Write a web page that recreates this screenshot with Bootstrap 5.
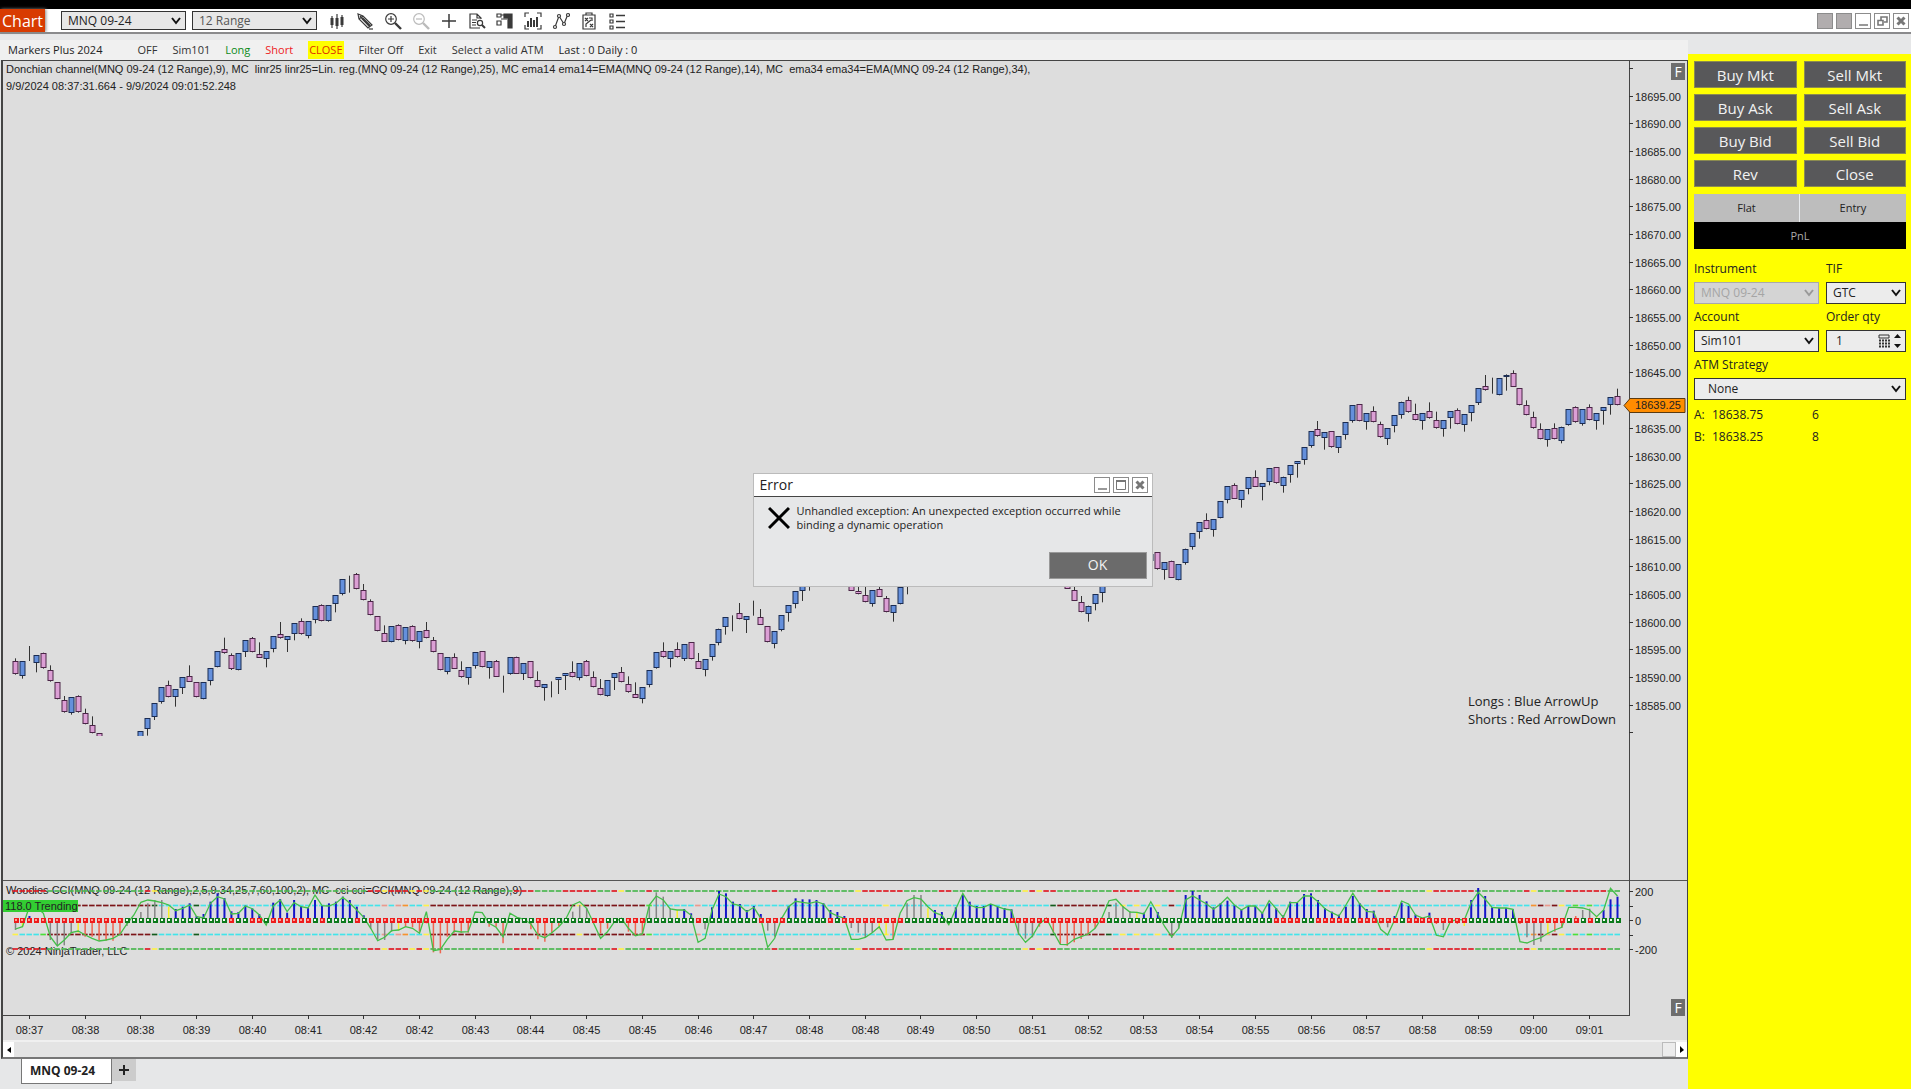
<!DOCTYPE html>
<html lang="en">
<head>
<meta charset="utf-8">
<meta name="viewport" content="width=device-width, initial-scale=1">
<title>Chart - MNQ 09-24</title>
<link href="https://cdn.jsdelivr.net/npm/bootstrap@5.3.0/dist/css/bootstrap.min.css" rel="stylesheet">
<style>
  :root { --ui: "Open Sans", "Noto Sans", sans-serif; --plot: "Liberation Sans", Arial, sans-serif; }
  body { background: #e6e7e8; font-family: var(--ui); font-size: 12px; line-height: 16px; color: #222; overflow: hidden; }
  .desk-edge { height: 9px; background: #000; }
  .titlebar { height: 25px; background: #fff; border-bottom: 2px solid #8a8a8c; }
  .brand { width: 45px; background: #d83b01; color: #fff; font-size: 16px; box-shadow: 1px 0 3px #888; }
  .tool-select, .entry-box {
    appearance: none; border: 1px solid #333; border-radius: 0; color: #222; height: 19px; padding: 0 18px 0 6px; line-height: 16px;
    background: #e7e7e7 url("data:image/svg+xml,%3Csvg xmlns='http://www.w3.org/2000/svg' viewBox='0 0 10 8'%3E%3Cpath d='M1 1l4 5 4-5' fill='none' stroke='%23111' stroke-width='2'/%3E%3C/svg%3E") no-repeat right 4px center / 10px 8px;
  }
  .tool-select { width: 125px; margin-right: 6px; }
  .tool-select.interval { color: #555; }
  .entry-box { height: 22px; width: 100%; background-color: #ececec; }
  .entry-box:disabled { background-color: #d4d4d4; color: #a5a5a5; border-color: #a9a9a9; opacity: 1; background-image: url("data:image/svg+xml,%3Csvg xmlns='http://www.w3.org/2000/svg' viewBox='0 0 10 8'%3E%3Cpath d='M1 1l4 5 4-5' fill='none' stroke='%23999' stroke-width='2'/%3E%3C/svg%3E"); }
  .tool-btn { width: 28px; height: 22px; padding: 0; border: 0; background: none; color: #3a3a3a; display: flex; align-items: center; justify-content: center; }
  .tool-btn svg { width: 18px; height: 18px; fill: none; stroke: currentColor; stroke-width: 1.2; }
  .tool-btn.dimmed { color: #bbb; }
  .win-group { gap: 3px; padding-right: 2px; }
  .win-btn { width: 16px; height: 16px; padding: 0; border: 1px solid #8c8c8c; background: #fff; display: flex; color: #777; }
  .win-btn svg { width: 14px; height: 14px; fill: none; stroke: currentColor; stroke-width: 2; }
  .win-btn.blank { background: #b1adae; }
  .menu-strip { height: 20px; margin-top: 6px; background: #f0f0f0; padding-left: 8px; gap: 15px; font-size: 11px; line-height: 18px; }
  .menu-strip button { border: 0; padding: 0; background: none; color: #333; line-height: 18px; }
  .menu-strip .go-long { color: #0b8a1a; }
  .menu-strip .go-short { color: #ee1c25; }
  .menu-strip .go-close { color: #e03000; background: #ff0; padding: 0 1px; }
  .fill-min { min-width: 0; min-height: 0; }
  .chart-frame { margin-left: 1px; background: #ddd; border: 1px solid #444; border-left-width: 2px; border-bottom: 2px solid #777; }
  .plot { font-family: var(--plot); font-size: 11px; fill: #222; display: block; width: 100%; height: 100%; }
  .plot .note { font-family: var(--ui); font-size: 13px; }
  .hscroll { height: 17px; background: #e4e4e4; border-top: 2px solid #f0f0f0; }
  .hscroll button { width: 11px; padding: 0; border: 0; background: #fff; display: flex; align-items: center; justify-content: center; }
  .hscroll .grip { width: 14px; background: #ececec; border: 1px solid #bbb; }
  .tabs { height: 30px; padding-left: 21px; }
  .tabs .chart-tab { width: 91px; height: 25px; background: #fff; border: 1px solid #777; border-top: 0; font-weight: 700; padding: 0 8px 0 0; color: #222; }
  .tabs .add-tab { width: 24px; height: 22px; border: 0; background: #ccc; padding: 0; display: flex; align-items: center; justify-content: center; }
  .trader { width: 223px; margin-top: 20px; background: #ff0; padding: 7px 5px 0 6px; }
  .order-btn { height: 27px; border: 1px solid #8b8b50; border-radius: 0; background: #58585a; color: #f2f2f2; font-size: 15px; line-height: 22px; padding: 0; }
  .order-grid { display: grid; grid-template-columns: 1fr 1fr; gap: 6px 7px; }
  .status-row { background: #bdbdbd; height: 28px; line-height: 28px; margin-top: 7px; font-size: 11px; text-align: center; }
  .pnl { background: #000; color: #aaa; height: 27px; line-height: 27px; font-size: 11px; text-align: center; margin-bottom: 7px; }
  .trader label { display: block; line-height: 20px; height: 26px; padding-top: 3px; }
  .pair { gap: 7px; }
  .col-wide { width: 125px; }
  .atm-box { padding-left: 13px; }
  .qty { border: 1px solid #333; background: #ececec; height: 22px; }
  .qty input { border: 0; background: none; width: 50px; padding: 0 0 0 9px; appearance: textfield; color: #222; }
  .qty input::-webkit-inner-spin-button { appearance: none; }
  .quote span:first-child { width: 18px; } .quote span:nth-child(2) { width: 100px; }
  .quote { line-height: 22px; }
  .error-box { position: absolute; left: calc(50% - 203px); top: calc(50% - 72px); width: 400px; height: 114px; background: #e6e7e8; border: 1px solid #bbb; }
  .error-head { height: 23px; background: #fff; border-bottom: 1px solid #444; padding: 0 4px 0 6px; font-size: 14px; }
  .error-body { padding: 7px 0 0 14px; gap: 7px; height: 55px; }
  .error-text { line-height: 14px; width: 345px; font-size: 11px; }
  .error-box .order-btn { width: 98px; background: #6b6b6b; border-color: #999; font-size: 14px; margin-right: 5px; }
</style>
<script src="https://cdn.jsdelivr.net/npm/bootstrap@5.3.0/dist/js/bootstrap.bundle.min.js"></script>
</head>
<body>
<div class="vh-100 d-flex flex-column">
  <div class="desk-edge"></div>
  <header class="titlebar d-flex align-items-center">
    <div class="brand h-100 d-flex align-items-center justify-content-center me-3">Chart</div>
    <select class="tool-select" aria-label="Instrument"><option>MNQ 09-24</option></select>
    <select class="tool-select interval" aria-label="Interval"><option>12 Range</option></select>
    <button class="tool-btn" aria-label="Chart style"><svg viewBox="0 0 18 18"><g stroke-width="3"><path d="M4 6v7M9 6v8M14 5v8"/></g><path d="M4 4v12M9 2v15M14 3v12"/></svg></button>
    <button class="tool-btn" aria-label="Draw"><svg viewBox="0 0 18 18"><path d="M2 2l1 5 9 9 4-3-9-9zM3 7l4-3M4 4l10 11"/><path d="M6 6l8 8" stroke-width="2.400"/><path d="M13 17h4"/></svg></button>
    <button class="tool-btn" aria-label="Zoom in"><svg viewBox="0 0 18 18"><circle cx="7" cy="7" r="5.3"/><path d="M4 7h6M7 4v6"/><path d="M11 11l6 6" stroke-width="2.4"/></svg></button>
    <button class="tool-btn dimmed" aria-label="Zoom out"><svg viewBox="0 0 18 18"><circle cx="7" cy="7" r="5.3"/><path d="M4 7h6"/><path d="M11 11l6 6" stroke-width="2.4"/></svg></button>
    <button class="tool-btn" aria-label="Crosshair"><svg viewBox="0 0 18 18"><path d="M9 2v14M2 9h14" stroke-width="1.5"/></svg></button>
    <button class="tool-btn" aria-label="Data box"><svg viewBox="0 0 18 18"><path d="M12 16H2V2h7l4 4v1M9 2v4h4M4 8h5M4 10.500h4M4 13h4"/><circle cx="12" cy="11" r="2.600"/><path d="M14 13l3 3" stroke-width="2"/></svg></button>
    <button class="tool-btn" aria-label="Chart trader"><svg viewBox="0 0 18 18"><path d="M1 2h4v3H1zM1 9h4v4H1zM5 3h6M5 7h6"/><path d="M8 2h8v4H8zM12 3h4v13h-4z" fill="currentColor"/></svg></button>
    <button class="tool-btn" aria-label="Indicators"><svg viewBox="0 0 18 18"><path d="M5 1H1v4M13 1h4v4M5 17H1v-4M13 17h4v-4"/><path d="M4 9v6M7 6v9M10 8v7M13 5v10" stroke-width="2"/></svg></button>
    <button class="tool-btn" aria-label="Drawing tools"><svg viewBox="0 0 18 18"><path d="M3 15L7 4l5 8 4-10"/><g fill="#fff"><circle cx="3" cy="15" r="1.500"/><circle cx="7" cy="4" r="1.500"/><circle cx="12" cy="12" r="1.500"/><circle cx="16" cy="3" r="1.500"/></g></svg></button>
    <button class="tool-btn" aria-label="Strategies"><svg viewBox="0 0 18 18" stroke-width="1"><path d="M3 3h12v14H3zM6 1h6v2H6z"/><path d="M5 6l3 3M8 6l-3 3M10 12l3 3M13 12l-3 3M6 15v-3l5-4M9 6h3v3"/></svg></button>
    <button class="tool-btn" aria-label="Properties"><svg viewBox="0 0 18 18"><path d="M2 2h3v3H2zM2 8h3v3H2zM2 14h3v3H2z"/><path d="M8 3.500h9M8 9.500h9M8 15.500h9" stroke-width="1.600"/></svg></button>
    <div class="win-group ms-auto d-flex">
      <button class="win-btn blank" aria-label="Link instrument"></button>
      <button class="win-btn blank" aria-label="Link interval"></button>
      <button class="win-btn" aria-label="Minimize"><svg viewBox="0 0 14 14"><path d="M3 11h9" stroke-width="1.500"/></svg></button>
      <button class="win-btn" aria-label="Restore"><svg viewBox="0 0 14 14"><path d="M6 6V3h6v5H9M3 6.500h5v4.500H3z" stroke-width="1.600"/></svg></button>
      <button class="win-btn" aria-label="Close"><svg viewBox="0 0 14 14"><path d="M3.500 3.500l7 7M10.500 3.500l-7 7" stroke-width="3"/></svg></button>
    </div>
  </header>

  <main class="d-flex flex-grow-1 fill-min">
    <section class="d-flex flex-column flex-grow-1 fill-min">
      <nav class="menu-strip d-flex flex-shrink-0 align-items-center">
        <span class="me-3 pe-1">Markers Plus 2024</span>
        <button>OFF</button><button>Sim101</button><button class="go-long">Long</button><button class="go-short">Short</button>
        <button class="go-close">CLOSE</button><button>Filter Off</button><button>Exit</button><button>Select a valid ATM</button>
        <span>Last : 0 Daily : 0</span>
      </nav>
      <div class="chart-frame d-flex flex-column flex-grow-1 fill-min">
        <div class="flex-grow-1 fill-min"><svg class="plot" id="plot" role="img" aria-label="MNQ 09-24 price chart"></svg></div>
        <div class="hscroll d-flex flex-shrink-0">
          <button aria-label="Scroll left"><svg width="4" height="6"><path d="M4 0v6L0 3z" fill="#000"/></svg></button>
          <div class="grip ms-auto"></div>
          <button aria-label="Scroll right"><svg width="4" height="7"><path d="M0 0v7l4-3z" fill="#000"/></svg></button>
        </div>
      </div>
      <div class="tabs d-flex flex-shrink-0">
        <button class="chart-tab">MNQ 09-24</button>
        <button class="add-tab" aria-label="Add tab"><svg width="12" height="12"><path d="M6 1v10M1 6h10" stroke="#222" stroke-width="2"/></svg></button>
      </div>
    </section>

    <aside class="trader flex-shrink-0">
      <div class="order-grid">
        <button class="btn order-btn">Buy Mkt</button><button class="btn order-btn">Sell Mkt</button>
        <button class="btn order-btn">Buy Ask</button><button class="btn order-btn">Sell Ask</button>
        <button class="btn order-btn">Buy Bid</button><button class="btn order-btn">Sell Bid</button>
        <button class="btn order-btn">Rev</button><button class="btn order-btn">Close</button>
      </div>
      <div class="status-row d-flex"><div class="w-50 border-end border-secondary-subtle">Flat</div><div class="w-50">Entry</div></div>
      <div class="pnl">PnL</div>
      <div class="pair d-flex">
        <div class="col-wide"><label for="inst">Instrument</label><select id="inst" class="entry-box" disabled><option>MNQ 09-24</option></select></div>
        <div class="flex-grow-1"><label for="tif">TIF</label><select id="tif" class="entry-box"><option>GTC</option></select></div>
      </div>
      <div class="pair d-flex">
        <div class="col-wide"><label for="acct">Account</label><select id="acct" class="entry-box"><option>Sim101</option></select></div>
        <div class="flex-grow-1"><label for="qty">Order qty</label>
          <div class="qty d-flex align-items-center"><input id="qty" type="number" value="1">
            <svg width="26" height="16" viewBox="0 0 26 16"><path d="M2 2h10v3H2z" fill="none" stroke="#333"/><path d="M2 7.500h11M2 10.500h11M2 13.500h11" stroke="#333" stroke-width="2" stroke-dasharray="2 1"/><path d="M17 5l3.500-4L24 5zM17 11l3.500 4 3.500-4z" fill="#111"/></svg></div>
        </div>
      </div>
      <label for="atm">ATM Strategy</label>
      <select id="atm" class="entry-box atm-box"><option>None</option></select>
      <div class="quote d-flex mt-1"><span>A:</span><span>18638.75</span><span>6</span></div>
      <div class="quote d-flex"><span>B:</span><span>18638.25</span><span>8</span></div>
    </aside>
  </main>
</div>

<div class="error-box" role="alertdialog" aria-labelledby="errTitle">
  <div class="error-head d-flex align-items-center"><span id="errTitle" class="me-auto">Error</span>
    <div class="win-group d-flex pe-0">
      <button class="win-btn" aria-label="Minimize"><svg viewBox="0 0 14 14"><path d="M3 11h9" stroke-width="1.500"/></svg></button>
      <button class="win-btn" aria-label="Maximize"><svg viewBox="0 0 14 14"><path d="M2.500 3v8.500h9V3" stroke-width="1"/><path d="M2 3h10"/></svg></button>
      <button class="win-btn" aria-label="Close"><svg viewBox="0 0 14 14"><path d="M3.500 3.500l7 7M10.500 3.500l-7 7" stroke-width="3"/></svg></button>
    </div>
  </div>
  <div class="error-body d-flex">
    <svg width="22" height="26" viewBox="0 0 22 26" class="flex-shrink-0"><path d="M1 4l20 20M21 4L1 24" stroke="#000" stroke-width="3"/></svg>
    <div class="error-text">Unhandled exception: An unexpected exception occurred while binding a dynamic operation</div>
  </div>
  <div class="d-flex justify-content-end"><button class="btn order-btn">OK</button></div>
</div>

<script>
// Candles: first bar number and top offset of each run, then "colour high open-close-top open-close-bottom low" in thirds of a pixel.
const RUNS = [
[0,560,"P 295 304 344 344,B 304 304 349 356,K 258 303 303 303,B 286 286 310 337,P 278 280 326 326,P 316 331 365 365,P 367 367 418 418,P 408 421 458 458,B 412 412 461 464,P 406 409 458 458,P 446 460 493 493,P 469 496 520 520,P 520 520 570 570"],
[18,560,"B 514 514 560 560,B 475 475 509 527,B 430 430 473 480,B 382 382 428 431,P 362 376 412 412,B 388 388 412 440,B 352 352 385 402,P 316 348 365 365,P 367 367 412 412,B 367 367 418 418,B 325 325 365 376,B 274 274 322 322,P 233 268 281 281,P 280 286 328 330,B 280 280 331 331,B 240 240 277 291,P 231 235 277 277,P 247 281 293 293,B 274 274 298 322,B 229 229 269 277,P 186 223 236 236,B 229 229 241 276,B 190 190 224 241,P 175 184 224 224,B 184 184 230 235,B 139 139 182 190,P 133 136 184 184,B 136 136 185 185,B 106 106 133 157,B 58 58 103 106,B 47 49 53 98,P 39 43 88 88,P 72 91 121 121,P 118 123 166 166,P 168 168 214 214,P 196 218 245 245,B 199 199 247 247,P 193 196 241 241,B 202 202 245 253,P 196 199 245 245,B 214 214 247 265,P 186 211 235 235,P 231 240 277 277,P 280 280 331 331,B 292 292 336 343,P 280 290 326 326,P 304 331 353 353,B 322 322 355 374,B 277 277 319 326,P 274 274 322 322,B 304 304 326 356,P 300 302 349 349,K 347 350 352 398,B 292 292 344 344,P 290 290 340 340,B 310 310 344 360,P 304 304 355 355,P 334 361 382 382,B 373 373 385 422,K 364 367 367 412,B 352 352 360 402,B 339 339 349 390,P 304 337 352 352,B 310 310 356 361,P 300 304 349 349,P 334 352 382 382,P 357 385 406 406,B 361 361 410 410,B 339 339 355 390,P 321 337 367 367,P 349 373 398 398,P 367 401 412 412,B 382 382 418 430,B 331 331 377 382,B 277 277 326 326,P 247 274 293 293,B 274 274 298 322,P 247 268 293 293,B 253 253 298 303,P 247 247 298 298,P 279 303 327 327,B 298 298 331 349,B 253 253 293 302,B 206 206 247 256,B 172 172 203 224,K 166 167 167 214,P 129 160 178 178,B 169 169 182 219,K 122 167 167 167,P 147 172 195 195,P 199 199 247 247,B 214 214 253 265,B 166 166 212 214,B 136 136 161 185,B 94 94 133 145,B 50 50 93 123,B 40 50 70 92"],
[120,560,"P 60 60 92 92,P 76 94 103 103,P 76 106 127 127,B 91 91 133 140,P 76 86 111 111,P 108 115 157 157,B 136 136 161 185,B 82 82 133 133,K 50 78 79 103"],
[151,360,"P 660 660 687 687,P 660 691 723 723,P 708 727 757 757,B 737 737 761 785,B 703 703 733 751,B 670 670 699 727"],
[163,360,"B 583 583 603 603,P 577 577 629 629,B 607 607 631 659,P 602 602 654 654,B 612 612 659 661,B 566 566 608 614,B 520 520 563 569,B 487 487 517 536,P 460 481 508 508,B 478 478 512 530,B 424 424 475 475,B 379 379 421 430,P 370 375 416 416,B 391 391 421 443,B 352 352 387 403,P 331 350 380 380,B 370 370 382 421,B 325 325 368 376,P 322 322 371 371,B 350 350 376 398,B 316 316 347 368,B 304 304 313 353,B 262 262 302 314,B 214 214 260 263,P 183 208 230 230,B 216 216 234 269,P 214 214 263 263,B 229 229 266 279,B 187 187 227 239,B 136 136 184 188,P 133 133 184 184,B 160 160 187 209,P 139 154 187 187,P 185 193 233 233,B 205 205 238 255,B 166 166 200 217,B 125 125 163 176,P 110 121 158 158,P 131 163 181 181,B 160 160 184 209,P 127 154 176 176,P 155 181 206 206,B 181 181 209 230,B 154 154 176 206,P 145 151 193 193,B 163 163 197 215,B 136 136 160 184,B 85 85 130 135,P 45 79 92 92,K 53 98 101 101,B 55 55 106 106,B 43 44 51 92,P 31 38 79 79,P 85 85 136 136,P 121 136 166 166,P 155 172 206 206,P 190 208 238 238,B 208 208 242 260,P 190 205 238 238,B 200 200 242 250,B 148 148 197 197,P 139 142 188 188,B 148 148 193 197,P 133 142 181 181,B 160 160 184 209,B 142 142 154 194,B 112 112 136 164,P 86 109 136 136"]];
// Run-length colour rows of the Woodies CCI panel.
const L200 = "R5 G14 R Y G30 R2 Y R3 Y R Y G12 R3 G4 R5 G2 R Y G3 R G17 R G11 Y R6 G5 R2 G10 Y R Y R2 G8 R4 G4 R G29 R2 G5 Y R6 G7 R Y G4 R6 G2";
const L100 = "Y C3 L D15 K C5 K C26 S C S O C2 Y D21 Y D9 L C6 S C26 Y C23 K D7 K C Y C Y C2 Y C D C51 O D S D Y C L C L C4";
const ZERO = "R16 G15 R G2 R2 G R6 G R G4 R G R15 G9 R2 G6 R2 G3 R3 G7 R G8 R4 G6 R G R9 G15 R14 G24 R4 G2 R5 G R6 G R9 G7 R7 G R G R G4";
// Histogram "colour+height", then the CCI line height, per bar.
const CCI = "g-30 -27 y-20 -20 b12 40 n0 38 n0 20 g-60 -50 g-75 -78 g-76 -60 g-38 -38 y-38 -33 r-50 -45 r-50 -55 r-62 -63 r-62 -60 r-62 -55 r-45 -43 g-18 -12 g5 15 g24 53 g50 60 g60 57 g60 52 y40 45 b33 28 b40 35 b50 45 b12 10 b18 6 b55 50 b80 70 b66 63 b26 18 b24 20 b43 42 b35 34 b18 15 n-5 -15 b52 42 b63 60 b22 25 b60 52 b42 40 b36 36 b60 75 b42 43 b50 42 b55 50 b70 68 b60 50 b40 30 b14 8 g-26 -25 g-58 -62 g-60 -52 g-35 -32 y-32 -30 r-20 -20 r-22 -25 r-35 -40 r-10 25 r-97 -92 r-100 -88 r-50 -58 r-38 -33 r-38 -36 r-38 -35 n0 24 n0 22 r-20 -10 r-20 -22 r-70 -50 n0 20 n0 8 n0 2 r-28 -12 r-58 -45 r-65 -53 r-40 -38 r-18 -20 n0 3 g25 45 g45 55 g35 35 r-8 -10 r-40 -55 r-26 -35 n0 -5 n0 5 r-35 -25 r-48 -47 r-45 -42 g40 45 g83 72 g70 60 g35 33 y30 30 b33 30 b20 14 r-5 -67 g-28 -55 b38 30 b87 78 b80 70 b55 48 b48 43 b30 25 b42 38 b18 5 g-32 -82 g-50 -55 b8 5 b42 40 b65 56 b62 53 b62 50 b60 55 b50 48 b30 22 b24 12 b12 5 g-24 -58 g-38 -58 g-52 -52 g-38 -38 y-28 -20 y-45 -60 r-58 -58 n0 20 g50 58 g75 67 g75 63 y35 40 b30 22 b24 14 n0 -14 b38 33 b75 80 b55 45 b42 37 b42 38 b48 48 b40 40 b36 33 b32 30 g-45 -40 g-56 -67 g-52 -48 r-20 -12 n0 5 r-38 -35 r-72 -73 r-77 -74 r-67 -58 r-57 -50 r-45 -42 r-25 -25 n0 8 g24 58 g52 62 g42 40 g26 24 y25 23 b22 18 b38 55 b24 18 n0 -20 g-54 -50 g-26 -25 b75 60 b87 73 b75 60 b56 48 b38 32 b50 48 b58 68 b44 45 b30 30 b42 42 b42 42 b22 20 b50 58 b36 34 b14 8 b55 52 b53 52 b78 72 b80 72 b60 55 b36 34 b25 22 b16 12 b40 45 b72 80 b50 48 b33 26 b28 24 r-10 -28 g-22 -45 b12 0 b52 57 b42 48 b16 15 b6 6 b22 12 r-12 -46 g-30 -50 n0 -5 r-12 2 y-18 0 b60 52 b96 83 b72 62 b38 38 b36 36 b36 36 b32 32 r-12 -65 g-52 -69 g-75 -60 g-65 -53 y-45 -40 r-35 -30 r-24 -22 n0 38 r12 38 g30 36 g34 30 y12 10 b30 30 b62 95 b70 72".split(" ");
const TIMES = "08:37 08:38 08:38 08:39 08:40 08:41 08:42 08:42 08:43 08:44 08:45 08:45 08:46 08:47 08:48 08:48 08:49 08:50 08:51 08:52 08:53 08:54 08:55 08:56 08:57 08:58 08:59 09:00 09:01".split(" ");
const expand = s => s.split(" ").map(t => t[0].repeat(+t.slice(1) || 1)).join("");
const HUE = {R:"#e01b24",G:"#4cb851",Y:"#fdf04a",C:"#43e4ea",L:"#4be03a",D:"#7c1518",K:"#135c1d",S:"#e99a8e",O:"#f59331"};
const BAR = {g:"#858585",y:"#f7f02a",b:"#1414c8",r:"#f06450",n:"none"};
const FILL = {P:"#dc9fd5",B:"#6590dc",K:"#222"};
const svg = document.getElementById("plot");

function draw() {
  const W = svg.clientWidth, H = svg.clientHeight, top = 61;
  const ax = W - 58, mid = H - 160, foot = H - 25, z = mid + 40;
  const step = (ax - 24) / 230, X = i => 12.5 + step * i;
  let o = "";
  const line = (x1, y1, x2, y2, c, w) => o += `<path d="M${x1} ${y1}L${x2} ${y2}" stroke="${c}" stroke-width="${w || 1}" fill="none"/>`;
  const text = (x, y, s, a) => o += `<text x="${x}" y="${y}" ${a || ""}>${s}</text>`;
  o += `<clipPath id="clip"><rect width="${W}" height="675"/></clipPath><g clip-path="url(#clip)">`;
  for (const [first, oy, list] of RUNS) list.split(",").forEach((c, k) => {
    const [col, ...v] = c.split(" "), [h, a, b, l] = v.map(n => oy - top + n / 3), x = Math.floor(X(first + k)) + .5;
    line(x, h, x, l, "#333");
    const bt = Math.round(a) + .5, bh = Math.max(0, Math.round(b - a) - 1);
    o += `<rect x="${x - 2.5}" y="${bt}" width="5" height="${bh}" fill="${FILL[col]}" stroke="${col == "P" ? "#4a2547" : col == "B" ? "#1b2c52" : "#111"}"/>`;
  });
  o += "</g>";
  text(3, 12, "Donchian channel(MNQ 09-24 (12 Range),9), MC&#160; linr25 linr25=Lin. reg.(MNQ 09-24 (12 Range),25), MC ema14 ema14=EMA(MNQ 09-24 (12 Range),14), MC&#160; ema34 ema34=EMA(MNQ 09-24 (12 Range),34),");
  text(3, 29, "9/9/2024 08:37:31.664 - 9/9/2024 09:01:52.248");
  text(ax - 161, 645, "Longs : Blue ArrowUp", 'class="note"');
  text(ax - 161, 663, "Shorts : Red ArrowDown", 'class="note"');
  // indicator panel
  line(0, mid + .5, W, mid + .5, "#555");
  text(3, mid + 14, "Woodies CCI(MNQ 09-24 (12 Range),2,5,9,34,25,7,60,100,2), MC&#160; cci cci=CCI(MNQ 09-24 (12 Range),9)");
  text(3, mid + 75, "© 2024 NinjaTrader, LLC");
  const a = expand(L200), b = expand(L100), q = expand(ZERO);
  let path = "";
  for (let i = 0; i < 231; i++) {
    const x = X(i), m = CCI[2 * i], v = +m.slice(1) / 3;
    for (const s of [-1, 1]) {
      line(x - 3, z + s * 29, x + 2.5, z + s * 29, HUE[a[i]], 1.7);
      line(x - 3, z + s * 14.5, x + 2.5, z + s * 14.5, HUE[b[i]], 1.7);
    }
    if (m[0] != "n") line(x, z, x, z - v, BAR[m[0]], m[0] == "b" ? 2 : 1.5);
    path += (i ? "L" : "M") + x.toFixed(1) + " " + (z - CCI[2 * i + 1] / 3).toFixed(1);
  }
  o += `<path d="${path}" fill="none" stroke="#43bf49" stroke-width="1.300"/>`;
  for (let i = 0; i < 231; i++) {
    const x = Math.round(X(i)), red = q[i] == "R";
    o += `<rect x="${x - 2}" y="${z - 2}" width="5" height="5" fill="${red ? "#ee1c1c" : "#0d7a1c"}"/><rect x="${x - 1}" y="${z - 1}" width="2" height="2" fill="${red ? "#ff9d94" : "#f4fff4"}"/>`;
  }
  o += `<rect x="0" y="${mid + 20}" width="75" height="12" fill="#32cd32"/>`;
  text(2, mid + 30, "118.0 Trending");
  // axes
  line(ax + .5, 0, ax + .5, foot, "#444");
  line(0, foot + .5, ax + 1, foot + .5, "#444");
  for (let k = 0; k < 25; k++) {
    const y = Math.round(7 + k * 27.68) + .5;
    line(ax, y, ax + 4, y, "#333");
    // the 18640 label lies under the last-price marker
    if (k && k < 24 && k != 12) text(ax + 6, y + 4, (18700 - 5 * k).toFixed(2));
  }
  [200, "", 0, "", -200].forEach((s, k) => {
    const y = Math.round(z - 29 + k * 14.5) + .5;
    line(ax, y, ax + 4, y, "#333");
    text(ax + 6, y + 4, s);
  });
  TIMES.forEach((s, k) => {
    const x = Math.floor(X(2 + 8 * k)) + .5;
    line(x, foot, x, foot + 4, "#333");
    text(x, foot + 19, s, 'text-anchor="middle"');
  });
  o += `<path d="M${ax - 5} 344.500l6-7h55v14h-55z" fill="#ff8c00" stroke="#5b3a10"/>`;
  text(ax + 6, 348, "18639.25");
  for (const y of [2, foot - 16])
    o += `<rect x="${W - 16}" y="${y}" width="14" height="17" fill="#6d6d6d"/><text x="${W - 9}" y="${y + 14}" text-anchor="middle" style="font:14px var(--ui);fill:#fff">F</text>`;
  svg.innerHTML = o;
}
draw();
addEventListener("resize", draw);
</script>
</body>
</html>
